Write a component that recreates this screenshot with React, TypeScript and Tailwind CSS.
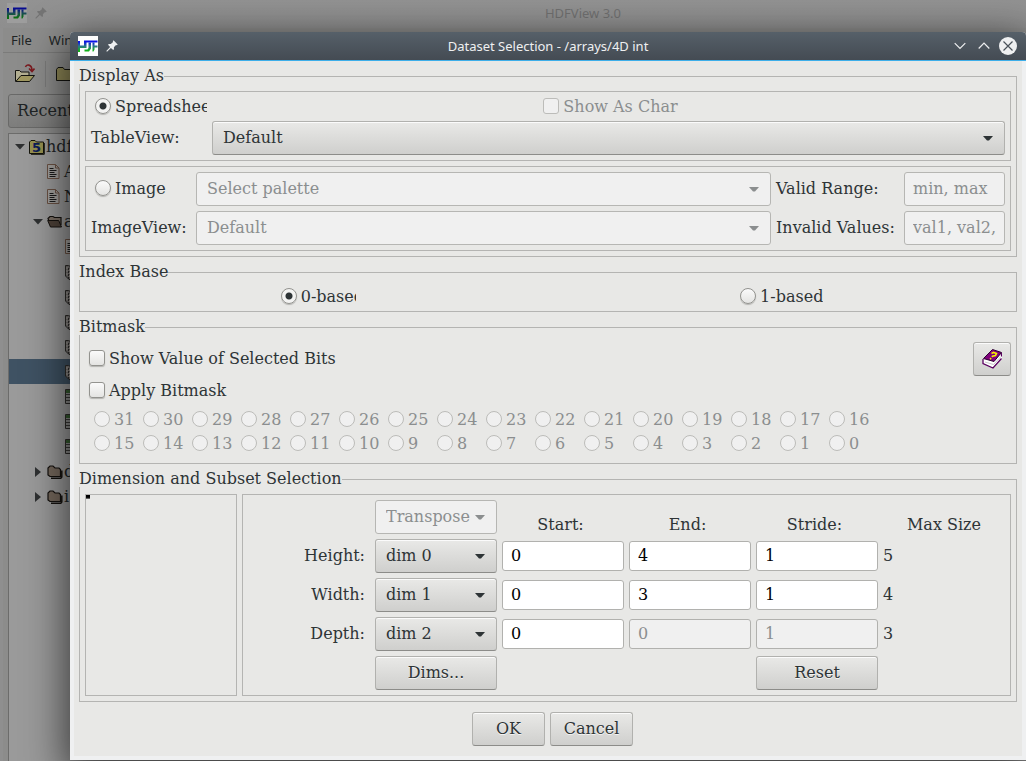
import { useState } from 'react';
import type { ReactNode } from 'react';

const RAISED =
  'rounded-[3px] border border-[#b1b1ae] border-b-[#8c8c89] bg-linear-to-b from-[#e9e9e7] to-[#cfcfcd] text-[#2e3436] shadow-[inset_0_1px_0_#fbfbfb] [text-shadow:0_1px_0_#f4f4f3]';
const FLAT = 'rounded-[3px] border border-[#b6b6b3] bg-[#f0f0f0] text-[#8b8e8f]';
const TICK =
  'mt-px size-4 shrink-0 appearance-none border border-[#93938f] bg-linear-to-b from-[#fafafa] to-[#e4e4e2] shadow-[0_1px_1px_#b4b4b1] disabled:border-[#bcbcb9] disabled:bg-none disabled:bg-[#f0f0f0] disabled:shadow-none';

function HdfLogo({ id }: { id: string }) {
  return (
    <svg width="20" height="20" viewBox="0 0 20 20" aria-hidden="true" className="shrink-0">
      <defs>
        <linearGradient id={id} x1="0" y1="4" x2="0" y2="16" gradientUnits="userSpaceOnUse">
          <stop offset="0.15" stopColor="#0a10e8" />
          <stop offset="0.5" stopColor="#2c7690" />
          <stop offset="0.9" stopColor="#10b414" />
        </linearGradient>
      </defs>
      <rect width="20" height="20" fill="#fdfdfd" />
      <g fill={`url(#${id})`}>
        <path d="M0 5h2v4.500h4V4.500h13.500V6.500H8.500V12H2v4H0z" />
        <path d="M10.500 6.500H13v6L11 15.500H6.500V13.500H9.500l1-1.500z" />
        <path d="M14.500 6.500H16.500v3h3V11.500h-3V13.500l-1 2h-1z" />
      </g>
    </svg>
  );
}

function Pin({ className }: { className: string }) {
  return (
    <svg width="12" height="12" viewBox="0 0 12 12" aria-hidden="true" className={className}>
      <path
        fill="currentColor"
        d="M7.5 0.3 11.7 4.5 10.8 5.2 10 4.9 7.9 7.2 8 9.2 7.2 10 4.9 7.9 1 11.7 0.3 11 4.1 7.1 2 4.8 2.8 4 4.8 4.1 7.1 2 6.8 1.2z"
      />
    </svg>
  );
}

function Arrow() {
  return (
    <svg
      width="10"
      height="5"
      viewBox="0 0 10 5"
      aria-hidden="true"
      className="pointer-events-none absolute top-1/2 right-[11px] -mt-[2px]"
    >
      <path d="M0 0h10L6 4.6H4z" fill="currentColor" />
    </svg>
  );
}

function Combo({ label, value, disabled }: { label: string; value: string; disabled?: boolean }) {
  return (
    <div className={`relative h-[34px] min-w-0 ${disabled ? FLAT : RAISED}`}>
      <select
        aria-label={label}
        disabled={disabled}
        className="block h-[31px] w-full appearance-none bg-transparent pr-6 pl-[10px] leading-[19px] opacity-100 outline-none"
      >
        <option>{value}</option>
      </select>
      <Arrow />
    </div>
  );
}

function Group({ title, className, children }: { title: string; className: string; children: ReactNode }) {
  return (
    <fieldset className="min-w-0 border border-[#b4b4b2]">
      <legend className="-ml-px h-[15px] leading-[13px]">{title}</legend>
      <div className={className}>{children}</div>
    </fieldset>
  );
}

function Radio({
  name,
  label,
  checked,
  disabled,
  onChange,
  className = '',
}: {
  name: string;
  label: string;
  checked: boolean;
  disabled?: boolean;
  onChange?: () => void;
  className?: string;
}) {
  return (
    <label
      className={`flex h-[19px] items-start gap-1 overflow-hidden leading-[19px] whitespace-nowrap ${disabled ? 'text-[#8b8e8f]' : ''} ${className}`}
    >
      <input
        type="radio"
        name={name}
        checked={checked}
        disabled={disabled}
        onChange={onChange ?? (() => undefined)}
        className={`${TICK} rounded-full checked:bg-[radial-gradient(circle,#2e3436_2px,#2e3436_3px,#f3f3f2_4px)]`}
      />
      {label}
    </label>
  );
}

function Check({ label, disabled, className = '' }: { label: string; disabled?: boolean; className?: string }) {
  return (
    <label
      className={`flex h-[19px] items-start gap-1 leading-[19px] ${disabled ? 'text-[#8b8e8f]' : ''} ${className}`}
    >
      <input
        type="checkbox"
        disabled={disabled}
        className={`${TICK} rounded-[3px] checked:bg-[radial-gradient(circle,#2e3436_3px,#f3f3f2_4px)]`}
      />
      {label}
    </label>
  );
}

function Field({ label, value, disabled }: { label: string; value: string; disabled?: boolean }) {
  return (
    <input
      aria-label={label}
      defaultValue={value}
      disabled={disabled}
      className="h-[30px] w-full min-w-0 self-center rounded-[3px] border border-[#b1b1ae] bg-white px-2 pb-0.5 text-black outline-none disabled:bg-[#f0f0f0] disabled:text-[#8b8e8f]"
    />
  );
}

function HelpBook() {
  return (
    <svg width="20" height="20" viewBox="0 0 20 20" aria-hidden="true">
      <path d="M1 11 20 5v5L11 19 1 15z" fill="#fff" />
      <path d="M10.500 0.500 19.500 3.500 12 12.500 1.500 9.500z" fill="#80007c" stroke="#2c0030" strokeWidth="1" />
      <path d="M19.500 4v3.500M1 10v4.500L11 19 19.500 9.500" fill="none" stroke="#5a0060" strokeWidth="1.300" />
      <path d="M3 13 11.500 15.500 18.500 8" fill="none" stroke="#b9b9b9" strokeWidth="0.800" />
      <path d="M9.500 4.500 11.500 3.400 14.500 4.400 13.500 6.500 10.500 7.200 10 8M9.200 9.200 8 10.200" fill="none" stroke="#f4f000" strokeWidth="1.600" />
    </svg>
  );
}

function OpenIcon() {
  return (
    <svg width="20" height="19" viewBox="0 0 20 19" aria-hidden="true">
      <path d="M10.500 3c1-3 6-3 6.500 3M14 4.500l3 3 2.500-3" fill="none" stroke="#7a1a1f" strokeWidth="1.600" />
      <path d="M.5 17.500V6.500h4l1.500 1.500h8v3" fill="#b3af92" stroke="#141410" />
      <path d="M.8 17.500 6 11.500h13.500l-5 6z" fill="#a09860" stroke="#141410" />
    </svg>
  );
}

function FileFolder() {
  return (
    <svg width="16" height="16" viewBox="0 0 16 16" aria-hidden="true" className="mr-px shrink-0">
      <path d="M.5 14.500V3L2 1.500h4L7.500 3h7v11.500z" fill="#96904f" stroke="#15150c" />
      <path d="M15.300 4v11.300H2" fill="none" stroke="#15150c" />
      <text x="3" y="13" className="font-['DejaVu_Sans'] text-[13px] font-bold" fill="#0c1c58">
        5
      </text>
    </svg>
  );
}

function GroupFolder({ open }: { open?: boolean }) {
  return (
    <svg width="16" height="14" viewBox="0 0 16 14" aria-hidden="true" className="shrink-0">
      {open ? (
        <>
          <path d="M2 6 1 3.500 3 1.500h3l1.500 1H14V10" fill="#7d7166" stroke="#14110e" strokeWidth="1.200" />
          <path d="M.7 5.500h11l2.800 6.500H3.500z" fill="#4e4239" stroke="#14110e" />
        </>
      ) : (
        <>
          <path d="M1 10V3l2-2h3l2 2h4l1.500 1.500v7H3z" fill="#74675b" stroke="#14110e" strokeWidth="1.200" />
          <path d="M14.800 5.500v6.500l-1 1.200H4" fill="none" stroke="#14110e" strokeWidth="1.500" />
        </>
      )}
    </svg>
  );
}

function DocIcon() {
  return (
    <svg width="14" height="15" viewBox="0 0 14 15" aria-hidden="true" className="shrink-0">
      <path d="M.5.5h8l3.500 3.500v10.500H.5z" fill="#a3a19e" stroke="#6b5244" />
      <path d="M8.500.5V4H12" fill="none" stroke="#6b5244" />
      <path d="M2.500 4.500h4M2.500 6.500h7M2.500 8.500h5M2.500 10.500h7M2.500 12.500h6" stroke="#1b1b1b" />
    </svg>
  );
}

function ArrayIcon() {
  return (
    <svg width="14" height="16" viewBox="0 0 14 16" aria-hidden="true" className="shrink-0">
      <path d="M.5 1.500h3l2 1h8v13H4L.5 12z" fill="#777472" stroke="#2e2c2a" />
      <path d="M2 3v8.500M4.500 5v9" stroke="#aaa49e" strokeDasharray="2 1" />
      <path d="M3.500 4v11" stroke="#2e2c2a" strokeDasharray="2 1" />
    </svg>
  );
}

function TableIcon() {
  return (
    <svg width="14" height="15" viewBox="0 0 14 15" aria-hidden="true" className="shrink-0">
      <path d="M.5.5h13v14H.5z" fill="#8a8a88" stroke="#2e2c2a" />
      <path d="M1 1h12v3H1z" fill="#355a2f" />
      <path d="M1 5.500h12M1 8.500h12M1 11.500h12" stroke="#3a3937" />
    </svg>
  );
}

function Twisty({ open }: { open?: boolean }) {
  return (
    <svg width="10" height="10" viewBox="0 0 10 10" aria-hidden="true" className="mr-[4px] shrink-0">
      <path d={open ? 'M0 2h10L5 7.500z' : 'M2 0v10L8 5z'} fill="#2f3132" />
    </svg>
  );
}

const LEAVES = ['doc', 'array', 'array', 'array', 'array', 'selected', 'table', 'table', 'table'];

function MainWindow() {
  return (
    <div className="col-start-1 row-start-1 flex min-w-0 flex-col bg-[#8f8f8f] text-[#202425]">
      <div className="flex h-7 items-center bg-linear-to-b from-[#929292] to-[#8e8e8e] pr-2 pb-0.5 pl-[7px]">
        <div className="brightness-[0.62]">
          <HdfLogo id="logo-main" />
        </div>
        <Pin className="ml-2 text-[#747474]" />
        <div className="flex-1 pl-[101px] text-center font-['Noto_Sans',sans-serif] text-[13px] leading-[18px] text-[#707070]">
          HDFView 3.0
        </div>
      </div>
      <div className="ml-[3px] flex flex-1 flex-col bg-[#8c8c8b]">
        <div className="flex h-[25px] items-center gap-[17px] border-b border-[#7b7b7a] pl-2 font-['Noto_Sans',sans-serif] text-[13px]">
          <span>File</span>
          <span>Win</span>
        </div>
        <div className="flex h-[41px] items-center pl-3">
          <OpenIcon />
          <div className="ml-[10px] h-[26px] w-px bg-[#7b7b7a]" />
          <svg width="20" height="16" viewBox="0 0 20 16" aria-hidden="true" className="ml-[10px]">
            <path d="M.5 14.500V3.500L2 1.500h5l1.500 2h11v11z" fill="#8d8655" stroke="#141410" />
          </svg>
        </div>
        <div className="ml-[5px] flex h-[34px] items-center rounded-[3px] border border-[#696968] bg-linear-to-b from-[#8c8c8b] to-[#7d7d7c] pl-2 leading-[18px]">
          Recent
        </div>
        <div className="mt-[5px] ml-[5px] flex-1 border-t border-l border-[#6c6c6b] bg-[#9a9a9a] leading-[25px]">
          <div className="flex h-[25px] items-center pl-[6px]">
            <Twisty open />
            <FileFolder />
            hdf
          </div>
          <div className="flex h-[25px] items-center gap-[3px] pl-[38px]">
            <DocIcon />A
          </div>
          <div className="flex h-[25px] items-center gap-[3px] pl-[38px]">
            <DocIcon />N
          </div>
          <div className="flex h-[25px] items-center pl-[24px]">
            <Twisty open />
            <GroupFolder open />
            <span className="pl-px">a</span>
          </div>
          {LEAVES.map((kind, i) => (
            <div key={i} className={`flex h-[25px] items-center pl-[56px] ${kind === 'selected' ? 'bg-[#3f5263]' : ''}`}>
              {kind === 'doc' ? <DocIcon /> : kind === 'table' ? <TableIcon /> : <ArrayIcon />}
            </div>
          ))}
          {['d', 'i'].map((name) => (
            <div key={name} className="flex h-[25px] items-center pl-[24px]">
              <Twisty />
              <GroupFolder />
              <span className="pl-px">{name}</span>
            </div>
          ))}
        </div>
      </div>
    </div>
  );
}

const BITS = Array.from({ length: 32 }, (_, i) => 31 - i);
const AXES = [
  { name: 'Height', dim: 'dim 0', end: '4', stride: '1', max: '5', locked: false },
  { name: 'Width', dim: 'dim 1', end: '3', stride: '1', max: '4', locked: false },
  { name: 'Depth', dim: 'dim 2', end: '0', stride: '1', max: '3', locked: true },
];

function DatasetDialog() {
  const [view, setView] = useState('sheet');
  const [base, setBase] = useState(0);
  return (
    <div
      role="dialog"
      aria-label="Dataset Selection"
      className="z-10 col-start-1 row-start-1 mt-8 mb-px ml-[70px] flex min-w-0 flex-col rounded-t-[4px] bg-[#eff0f1] shadow-[0_12px_40px_4px_rgba(0,0,0,0.65)]"
    >
      <header className="flex h-[29px] items-center rounded-t-[4px] border-b border-[#3daee9] bg-linear-to-b from-[#566069] to-[#444b53] pr-[9px] pl-2 text-[#eff0f1]">
        <HdfLogo id="logo-dialog" />
        <Pin className="ml-2" />
        <h1 className="flex-1 pl-6 text-center font-['Noto_Sans',sans-serif] text-[13px] leading-[18px]">
          Dataset Selection - /arrays/4D int
        </h1>
        <div className="flex items-center gap-3">
          <button type="button" aria-label="Minimize" className="block">
            <svg width="12" height="8" viewBox="0 0 12 8" className="block">
              <path d="M.7 1.200 6 6.500l5.300-5.300" fill="none" stroke="currentColor" strokeWidth="1.200" />
            </svg>
          </button>
          <button type="button" aria-label="Maximize" className="block">
            <svg width="12" height="8" viewBox="0 0 12 8" className="block">
              <path d="M.7 6.500 6 1.200l5.300 5.300" fill="none" stroke="currentColor" strokeWidth="1.200" />
            </svg>
          </button>
          <button type="button" aria-label="Close" className="-ml-[3px] block">
            <svg width="18" height="18" viewBox="0 0 18 18" className="block">
              <circle cx="9" cy="9" r="9" fill="currentColor" />
              <path d="m4.500 4.500 9 9m0-9-9 9" stroke="#4a525a" strokeWidth="1.200" />
            </svg>
          </button>
        </div>
      </header>

      <div className="mx-1 mb-1 flex flex-1 flex-col gap-2 bg-[#e8e8e6] px-[5px] pt-2">
        <Group title="Display As" className="flex flex-col gap-[5px] px-[5px] pt-[7px] pb-[5px]">
          <div className="grid grid-cols-[116px_1fr] items-center gap-[5px] border border-[#b4b4b2] p-[5px]">
            <Radio
              name="view"
              label="Spreadsheet"
              checked={view === 'sheet'}
              onChange={() => setView('sheet')}
              className="pl-1"
            />
            <Check label="Show As Char" disabled className="justify-self-center pl-1" />
            <span>TableView:</span>
            <Combo label="TableView" value="Default" />
          </div>
          <div className="grid grid-cols-[100px_1fr_123px_101px] items-center gap-[5px] border border-[#b4b4b2] p-[5px]">
            <Radio
              name="view"
              label="Image"
              checked={view === 'image'}
              onChange={() => setView('image')}
              className="mb-px pl-1"
            />
            <Combo label="Palette" value="Select palette" disabled />
            <label htmlFor="valid">Valid Range:</label>
            <input
              id="valid"
              disabled
              placeholder="min, max"
              className={`h-[34px] w-full min-w-0 px-2 pb-0.5 placeholder:text-[#8b8e8f] placeholder:opacity-100 ${FLAT}`}
            />
            <span>ImageView:</span>
            <Combo label="ImageView" value="Default" disabled />
            <label htmlFor="invalid" className="whitespace-nowrap">
              Invalid Values:
            </label>
            <input
              id="invalid"
              disabled
              placeholder="val1, val2,"
              className={`h-[34px] w-full min-w-0 px-2 pb-0.5 placeholder:text-[#8b8e8f] placeholder:opacity-100 ${FLAT}`}
            />
          </div>
        </Group>

        <Group
          title="Index Base"
          className="grid h-[31px] grid-cols-2 items-start justify-items-center gap-[5px] pt-[7px] pr-[5px] pl-[9px]"
        >
          <Radio name="base" label="0-based" checked={base === 0} onChange={() => setBase(0)} className="w-[75px]" />
          <Radio name="base" label="1-based" checked={base === 1} onChange={() => setBase(1)} />
        </Group>

        <Group title="Bitmask" className="flex flex-col pt-[7px] pr-[5px] pb-[10px] pl-[9px]">
          <div className="flex items-center justify-between">
            <Check label="Show Value of Selected Bits" className="mb-px" />
            <button type="button" aria-label="Help" className={`flex h-[34px] w-[38px] items-center justify-center ${RAISED}`}>
              <HelpBook />
            </button>
          </div>
          <Check label="Apply Bitmask" className="mt-[5px] self-start" />
          <div className="mt-[10px] grid grid-cols-[repeat(16,44px)] gap-[5px] pl-[5px]">
            {BITS.map((bit) => (
              <Radio key={bit} name="bits" label={String(bit)} checked={false} disabled />
            ))}
          </div>
        </Group>

        <Group title="Dimension and Subset Selection" className="flex gap-[5px] px-[5px] pt-[7px] pb-[5px]">
          <div className="w-[152px] shrink-0 border border-[#b4b4b2]">
            <div className="h-1 w-1 bg-linear-to-b from-black from-50% to-[#8a8a88]" />
          </div>
          <div className="grid min-w-0 flex-1 auto-rows-[34px] grid-cols-6 gap-[5px] border border-[#b4b4b2] p-[5px]">
            <div className="col-start-2">
              <Combo label="Transpose" value="Transpose" disabled />
            </div>
            <span className="self-end pr-[5px] text-center">Start:</span>
            <span className="self-end pr-[5px] text-center">End:</span>
            <span className="self-end pr-[5px] text-center">Stride:</span>
            <span className="self-end text-center">Max Size</span>
            {AXES.map((axis) => (
              <div key={axis.name} className="contents">
                <span className="self-center pr-[5px] text-right">{axis.name}:</span>
                <Combo label={`${axis.name} dimension`} value={axis.dim} />
                <Field label={`${axis.name} start`} value="0" />
                <Field label={`${axis.name} end`} value={axis.end} disabled={axis.locked} />
                <Field label={`${axis.name} stride`} value={axis.stride} disabled={axis.locked} />
                <span className="self-center">{axis.max}</span>
              </div>
            ))}
            <button type="button" className={`col-start-2 ${RAISED}`}>
              Dims...
            </button>
            <button type="button" className={`col-start-5 ${RAISED}`}>
              Reset
            </button>
          </div>
        </Group>

        <div className="mt-[2px] mb-[10px] flex justify-center gap-[5px] pl-[9px]">
          <button type="button" className={`h-[34px] w-[73px] ${RAISED}`}>
            OK
          </button>
          <button type="button" className={`h-[34px] w-[83px] ${RAISED}`}>
            Cancel
          </button>
        </div>
      </div>
    </div>
  );
}

export default function App() {
  return (
    <main className="grid min-h-screen grid-cols-[minmax(0,1fr)] overflow-hidden bg-[#5c5d5e] font-['DejaVu_Serif',serif] text-base leading-[18px] text-[#2e3436]">
      <MainWindow />
      <DatasetDialog />
    </main>
  );
}
